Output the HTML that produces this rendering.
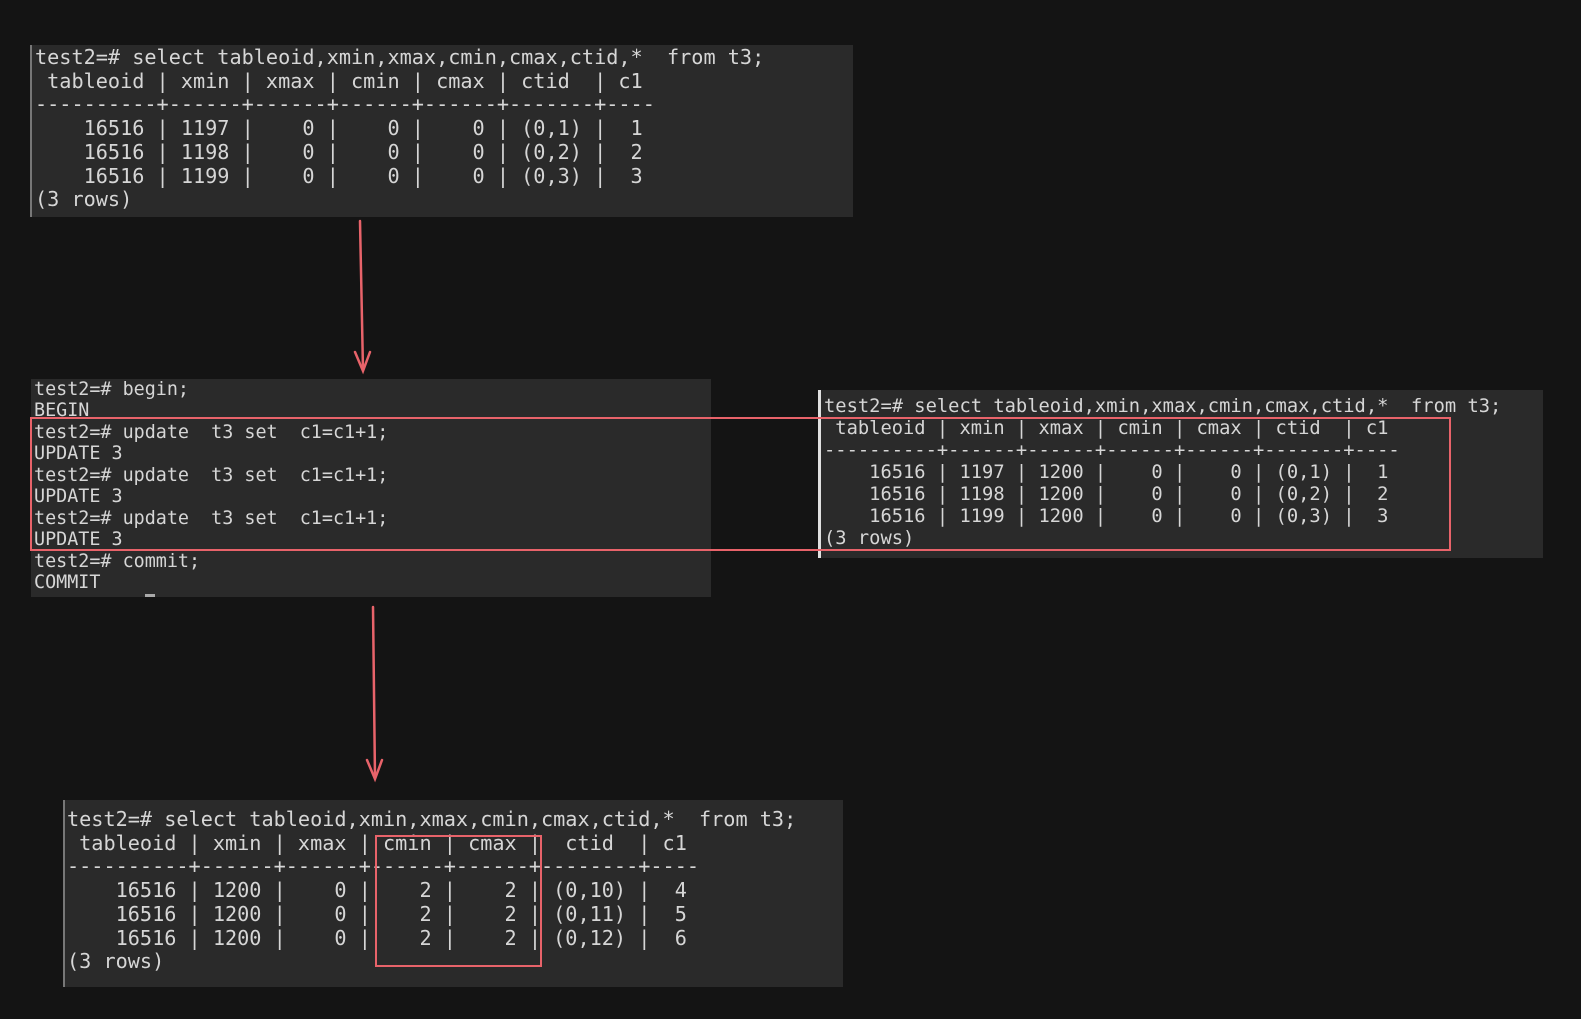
<!DOCTYPE html>
<html><head><meta charset="utf-8"><style>
html,body{margin:0;padding:0;background:#141414;width:1581px;height:1019px;overflow:hidden;position:relative}
.p{position:absolute;background:#2a2a2a}
pre{position:absolute;margin:0;font-family:"DejaVu Sans Mono","Liberation Mono",monospace;color:#d6d6d6;white-space:pre}
.r{position:absolute;border:2px solid #e8636a;box-sizing:border-box}
</style></head><body>
<div class="p" style="left:30px;top:45px;width:821px;height:172px;border-left:2px solid #777"></div>
<pre style="left:35px;top:46px;font-size:20.2px;line-height:23.7px">test2=# select tableoid,xmin,xmax,cmin,cmax,ctid,*  from t3;
 tableoid | xmin | xmax | cmin | cmax | ctid  | c1
----------+------+------+------+------+-------+----
    16516 | 1197 |    0 |    0 |    0 | (0,1) |  1
    16516 | 1198 |    0 |    0 |    0 | (0,2) |  2
    16516 | 1199 |    0 |    0 |    0 | (0,3) |  3
(3 rows)</pre>

<div class="p" style="left:31px;top:379px;width:680px;height:218px"></div>
<pre style="left:34px;top:379px;font-size:18.4px;line-height:21.45px">test2=# begin;
BEGIN
test2=# update  t3 set  c1=c1+1;
UPDATE 3
test2=# update  t3 set  c1=c1+1;
UPDATE 3
test2=# update  t3 set  c1=c1+1;
UPDATE 3
test2=# commit;
COMMIT
          <span style="display:inline-block;width:10px;height:3px;background:#aaa;vertical-align:top"></span></pre>

<div class="p" style="left:818px;top:390px;width:725px;height:168px;border-left:3px solid #e0e0e0;box-sizing:border-box"></div>
<pre style="left:824px;top:396px;font-size:18.75px;line-height:22px">test2=# select tableoid,xmin,xmax,cmin,cmax,ctid,*  from t3;
 tableoid | xmin | xmax | cmin | cmax | ctid  | c1
----------+------+------+------+------+-------+----
    16516 | 1197 | 1200 |    0 |    0 | (0,1) |  1
    16516 | 1198 | 1200 |    0 |    0 | (0,2) |  2
    16516 | 1199 | 1200 |    0 |    0 | (0,3) |  3
(3 rows)</pre>

<div class="p" style="left:63px;top:800px;width:778px;height:187px;border-left:2px solid #777"></div>
<pre style="left:67px;top:808px;font-size:20.2px;line-height:23.7px">test2=# select tableoid,xmin,xmax,cmin,cmax,ctid,*  from t3;
 tableoid | xmin | xmax | cmin | cmax |  ctid  | c1
----------+------+------+------+------+--------+----
    16516 | 1200 |    0 |    2 |    2 | (0,10) |  4
    16516 | 1200 |    0 |    2 |    2 | (0,11) |  5
    16516 | 1200 |    0 |    2 |    2 | (0,12) |  6
(3 rows)</pre>

<div class="r" style="left:30px;top:417px;width:1421px;height:134px"></div>
<div class="r" style="left:375px;top:835px;width:167px;height:132px"></div>

<svg style="position:absolute;left:0;top:0" width="1581" height="1019">
<g stroke="#e8636a" stroke-width="2.5" fill="none" stroke-linecap="round">
<line x1="360" y1="221" x2="363" y2="370"/>
<polyline points="355,352 363,371 370,352"/>
<line x1="373" y1="607" x2="375" y2="778"/>
<polyline points="367,760 375,779 382,760"/>
</g>
</svg>
</body></html>
